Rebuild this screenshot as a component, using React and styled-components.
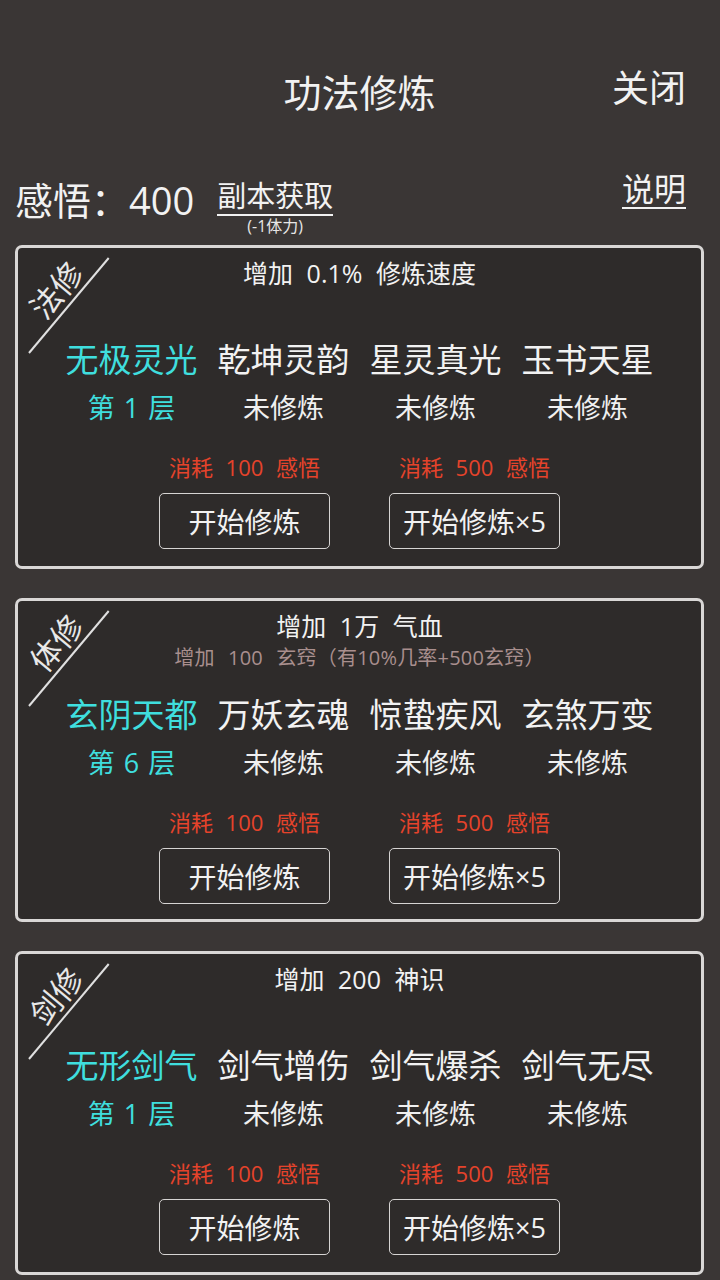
import React from 'react'
import styled, { createGlobalStyle } from 'styled-components'

const GlobalStyle = createGlobalStyle`
  html, body {
    margin: 0;
    padding: 0;
    background: #3a3635;
  }
  body {
    font-family: "Open Sans", "Noto Sans CJK SC", sans-serif;
    color: #f2f2f2;
  }
`

const sections = [
  {
    tag: '法修',
    title: '增加 0.1% 修炼速度',
    sub: null,
    skills: ['无极灵光', '乾坤灵韵', '星灵真光', '玉书天星'],
    level: 1,
  },
  {
    tag: '体修',
    title: '增加 1万 气血',
    sub: '增加 100 玄窍（有10%几率+500玄窍）',
    skills: ['玄阴天都', '万妖玄魂', '惊蛰疾风', '玄煞万变'],
    level: 6,
  },
  {
    tag: '剑修',
    title: '增加 200 神识',
    sub: null,
    skills: ['无形剑气', '剑气增伤', '剑气爆杀', '剑气无尽'],
    level: 1,
  },
]

function App() {
  return (
    <Page>
      <GlobalStyle />
      <HeaderRow>
        <span />
        <Title>功法修炼</Title>
        <Close>关闭</Close>
      </HeaderRow>

      <StatsRow>
        <Insight>感悟：400</Insight>
        <Fetch>
          <FetchLink>副本获取</FetchLink>
          <FetchCost>(-1体力)</FetchCost>
        </Fetch>
        <Help>说明</Help>
      </StatsRow>

      <Cards>
        {sections.map((s) => (
          <Card key={s.tag}>
            <CornerLine />
            <CornerTag>{s.tag}</CornerTag>
            <CardTitle>{s.title}</CardTitle>
            <SubArea>{s.sub && <SubLine>{s.sub}</SubLine>}</SubArea>
            <SkillGrid>
              {s.skills.map((name, i) => (
                <SkillName key={name} $active={i === 0}>{name}</SkillName>
              ))}
            </SkillGrid>
            <LevelGrid>
              {s.skills.map((name, i) => (
                <Level key={name} $active={i === 0}>
                  {i === 0 ? `第 ${s.level} 层` : '未修炼'}
                </Level>
              ))}
            </LevelGrid>
            <ActionGrid>
              <Action>
                <Cost>消耗 100 感悟</Cost>
                <TrainButton>开始修炼</TrainButton>
              </Action>
              <Action>
                <Cost>消耗 500 感悟</Cost>
                <TrainButton>开始修炼<Times>×5</Times></TrainButton>
              </Action>
            </ActionGrid>
          </Card>
        ))}
      </Cards>
    </Page>
  )
}

const Page = styled.div`
  width: 720px;
  height: 1280px;
  box-sizing: border-box;
  padding: 70px 16px 0 15px;
  overflow: hidden;
`
const HeaderRow = styled.div`
  display: grid;
  grid-template-columns: 1fr auto 1fr;
  height: 44px;
  align-items: center;
`
const Title = styled.div`
  font-size: 38px;
  line-height: 44px;
`
const Close = styled.div`
  justify-self: end;
  margin-right: 18px;
  margin-top: -8px;
  font-size: 37px;
  line-height: 44px;
`
const StatsRow = styled.div`
  display: flex;
  align-items: flex-start;
  height: 71px;
  margin-top: 60px;
`
const Insight = styled.div`
  font-size: 38px;
  line-height: 52px;
`
const Fetch = styled.div`
  display: flex;
  flex-direction: column;
  align-items: center;
  margin-left: 23px;
  margin-top: 4px;
`
const FetchLink = styled.div`
  font-size: 29px;
  line-height: 36px;
  border-bottom: 2px solid #f2f2f2;
`
const FetchCost = styled.div`
  font-size: 16px;
  line-height: 20px;
  color: #e6e6e6;
`
const Help = styled.div`
  margin-left: auto;
  margin-right: 18px;
  margin-top: -3px;
  font-size: 32px;
  line-height: 36px;
  border-bottom: 2px solid #f2f2f2;
`
const Cards = styled.div`
  display: flex;
  flex-direction: column;
  gap: 29px;
`
const Card = styled.div`
  position: relative;
  height: 324px;
  box-sizing: border-box;
  padding-top: 9px;
  border: 3px solid #d9d7d6;
  border-radius: 7px;
  background: #2e2b2a;
`
const CornerLine = styled.div`
  position: absolute;
  left: 11px;
  top: 104px;
  width: 124px;
  height: 2px;
  background: #e0e0e0;
  transform-origin: left center;
  transform: rotate(-50deg);
`
const CornerTag = styled.div`
  position: absolute;
  left: 2px;
  top: 23px;
  width: 72px;
  height: 38px;
  font-size: 31px;
  line-height: 38px;
  text-align: center;
  color: #e8e8e8;
  transform: rotate(-50deg);
`
const CardTitle = styled.div`
  text-align: center;
  font-size: 25px;
  line-height: 32px;
  word-spacing: 7px;
`
const SubArea = styled.div`
  height: 51px;
  text-align: center;
`
const SubLine = styled.div`
  margin-top: 2px;
  font-size: 20px;
  line-height: 28px;
  word-spacing: 8px;
  letter-spacing: 0.2px;
  color: #a98f8e;
`
const SkillGrid = styled.div`
  display: grid;
  grid-template-columns: repeat(4, 152px);
  justify-content: center;
`
const SkillName = styled.div`
  text-align: center;
  font-size: 33px;
  line-height: 40px;
  color: ${(p) => (p.$active ? '#3fdede' : '#f2f2f2')};
`
const LevelGrid = styled(SkillGrid)`
  margin-top: 11px;
`
const Level = styled.div`
  text-align: center;
  font-size: 27px;
  line-height: 34px;
  word-spacing: 2px;
  color: ${(p) => (p.$active ? '#3fdede' : '#f0f0f0')};
`
const ActionGrid = styled.div`
  display: grid;
  grid-template-columns: repeat(2, 230px);
  justify-content: center;
  margin-top: 27px;
`
const Action = styled.div`
  display: flex;
  flex-direction: column;
  align-items: center;
`
const Cost = styled.div`
  font-size: 22px;
  line-height: 30px;
  word-spacing: 7px;
  color: #e5432b;
`
const TrainButton = styled.div`
  margin-top: 11px;
  width: 171px;
  height: 56px;
  box-sizing: border-box;
  display: flex;
  align-items: center;
  justify-content: center;
  border: 1.5px solid #d6d4d3;
  border-radius: 5px;
  font-size: 28px;
  white-space: nowrap;
`
const Times = styled.span`
  font-size: 27px;
`

export default App
